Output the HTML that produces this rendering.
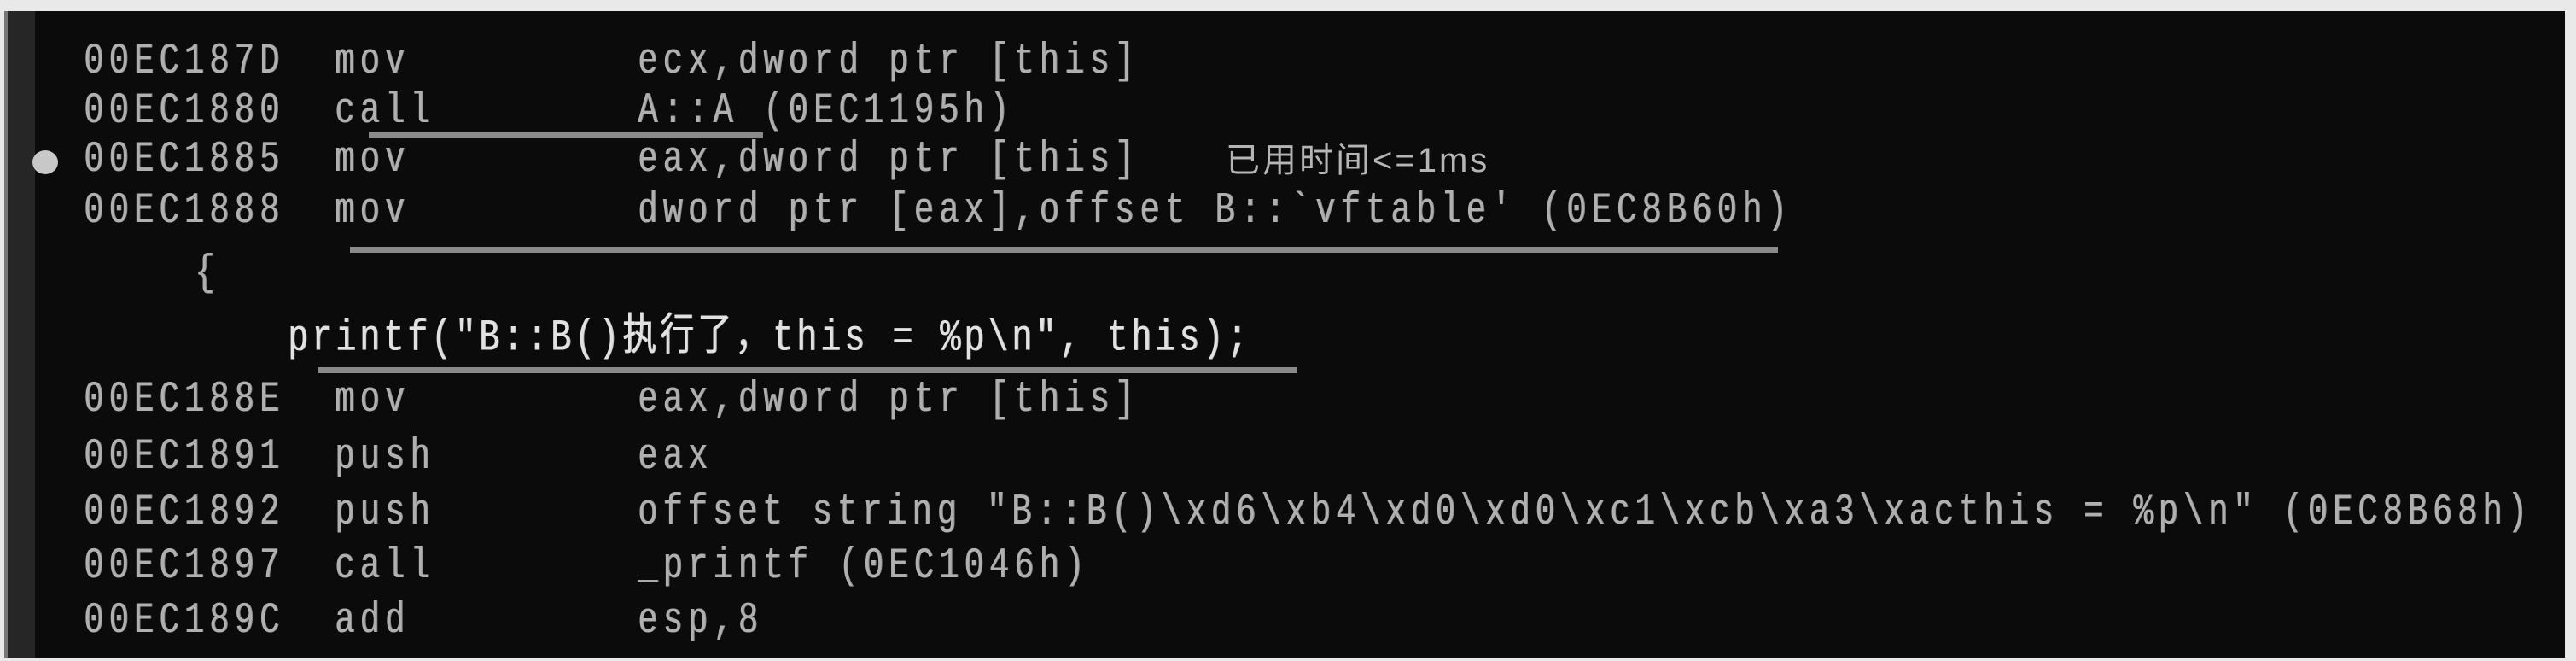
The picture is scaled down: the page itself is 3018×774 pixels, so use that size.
<!DOCTYPE html>
<html><head><meta charset="utf-8"><style>
html,body{margin:0;padding:0}
body{width:3018px;height:774px;background:#e9e9e9;position:relative;overflow:hidden}
#panel{position:absolute;left:5px;top:13px;width:3000px;height:757px;background:#0b0b0b}
#gut{position:absolute;left:5px;top:13px;width:32px;height:757px;background:#262626;border-left:4px solid #777}
.t{position:absolute;white-space:pre;font-family:"Liberation Mono","Noto Sans CJK SC",monospace;font-size:39px;letter-spacing:6px;color:#b0b0b0;line-height:40px;transform:scaleY(1.3);text-shadow:1px 0 0 #8a8a8a}
.p{color:#e2e2e2;font-family:"Liberation Mono","Noto Sans CJK SC",monospace;letter-spacing:4px;font-size:40px;text-shadow:1px 0 0 #bbb}
.u{position:absolute;height:7px;background:#8a8a8a}
.s{position:absolute;white-space:pre;font-family:"Liberation Sans","Noto Sans CJK SC",sans-serif;font-size:40px;letter-spacing:3px;color:#b5b5b5;line-height:40px}
</style></head><body>
<div id="panel"></div>
<div id="gut"></div>
<div style="position:absolute;left:38px;top:176px;width:30px;height:28px;border-radius:50%;background:#c8c8c8"></div>

<div class="t" style="left:98px;top:52px">00EC187D</div><div class="t" style="left:392px;top:52px">mov</div><div class="t" style="left:747px;top:52px">ecx,dword ptr [this]</div>
<div class="t" style="left:98px;top:110px">00EC1880</div><div class="t" style="left:392px;top:110px">call</div><div class="t" style="left:747px;top:110px">A::A (0EC1195h)</div>
<div class="t" style="left:98px;top:167px">00EC1885</div><div class="t" style="left:392px;top:167px">mov</div><div class="t" style="left:747px;top:167px">eax,dword ptr [this]</div>
<div class="s" style="left:1436px;top:168px">已用时间&lt;=1ms</div>
<div class="t" style="left:98px;top:227px">00EC1888</div><div class="t" style="left:392px;top:227px">mov</div><div class="t" style="left:747px;top:227px">dword ptr [eax],offset B::`vftable' (0EC8B60h)</div>
<div class="t" style="left:228px;top:300px">{</div>
<div class="t p" style="left:337px;top:378px">printf("B::B()执行了，this = %p\n", this);</div>
<div class="t" style="left:98px;top:448px">00EC188E</div><div class="t" style="left:392px;top:448px">mov</div><div class="t" style="left:747px;top:448px">eax,dword ptr [this]</div>
<div class="t" style="left:98px;top:515px">00EC1891</div><div class="t" style="left:392px;top:515px">push</div><div class="t" style="left:747px;top:515px">eax</div>
<div class="t" style="left:98px;top:580px">00EC1892</div><div class="t" style="left:392px;top:580px">push</div><div class="t" style="left:747px;top:580px;letter-spacing:5.8px">offset string "B::B()\xd6\xb4\xd0\xd0\xc1\xcb\xa3\xacthis = %p\n" (0EC8B68h)</div>
<div class="t" style="left:98px;top:643px">00EC1897</div><div class="t" style="left:392px;top:643px">call</div><div class="t" style="left:747px;top:643px">_printf (0EC1046h)</div>
<div class="t" style="left:98px;top:707px">00EC189C</div><div class="t" style="left:392px;top:707px">add</div><div class="t" style="left:747px;top:707px">esp,8</div>

<div class="u" style="left:432px;top:155px;width:462px"></div>
<div class="u" style="left:410px;top:289px;width:1673px"></div>
<div class="u" style="left:373px;top:430px;width:1147px"></div>
</body></html>
